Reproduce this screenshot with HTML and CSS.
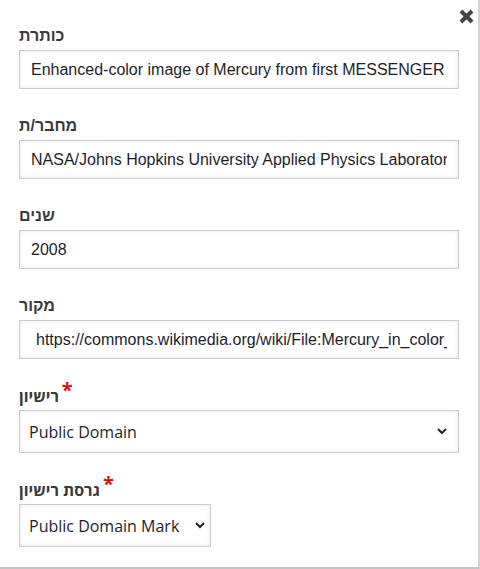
FILE: index.html
```html
<!DOCTYPE html>
<html lang="he">
<head>
<meta charset="utf-8">
<title>פרטי קובץ</title>
<link rel="stylesheet" href="styles.css">
</head>
<body>
<div class="panel">
  <button class="close" aria-label="סגירה">
    <svg width="15" height="15" viewBox="0 0 15 15"><path d="M2 2 L13 13 M13 2 L2 13" stroke="#444" stroke-width="4" stroke-linecap="butt"/></svg>
  </button>
  <form class="form">
    <div class="field">
      <label class="label">כותרת</label>
      <input class="input" type="text" value="Enhanced-color image of Mercury from first MESSENGER flyby">
    </div>
    <div class="field">
      <label class="label">מחבר/ת</label>
      <input class="input" type="text" value="NASA/Johns Hopkins University Applied Physics Laboratory/Carnegie Institution of Washington">
    </div>
    <div class="field">
      <label class="label">שנים</label>
      <input class="input" type="text" value="2008">
    </div>
    <div class="field">
      <label class="label">מקור</label>
      <input class="input input-url" type="text" value="https://commons.wikimedia.org/wiki/File:Mercury_in_color_-_Prockter07_centered.jpg">
    </div>
    <div class="field">
      <label class="label label-os"><span class="req">*</span>רישיון</label>
      <div class="select-wrap">
        <select class="select"><option>Public Domain</option></select>
        <svg class="chev" width="10" height="7" viewBox="0 0 10 7"><path d="M1 1 L5 5 L9 1" fill="none" stroke="#222" stroke-width="2"/></svg>
      </div>
    </div>
    <div class="field">
      <label class="label label-os"><span class="req">*</span>גרסת רישיון</label>
      <div class="select-wrap select-inline">
        <select class="select select-small"><option>Public Domain Mark</option></select>
        <svg class="chev chev-small" width="10" height="7" viewBox="0 0 10 7"><path d="M1 1 L5 5 L9 1" fill="none" stroke="#222" stroke-width="2"/></svg>
      </div>
    </div>
  </form>
</div>
</body>
</html>
```
FILE: styles.css
```css
html, body {
  margin: 0;
  padding: 0;
  background: #fff;
}
.panel {
  position: relative;
  box-sizing: border-box;
  width: 480px;
  height: 569px;
  border-right: 2px solid #d2d2d2;
  border-bottom: 2px solid #c4c4c4;
  background: #fff;
}
.close {
  position: absolute;
  top: 9px;
  right: 4px;
  padding: 0;
  margin: 0;
  border: 0;
  background: none;
  width: 15px;
  height: 15px;
  line-height: 0;
}
.form {
  display: flex;
  flex-direction: column;
  gap: 27px;
  padding: 26px 0 0 19px;
}
.field {
  display: flex;
  flex-direction: column;
  align-items: flex-start;
  gap: 4px;
}
.label {
  display: block;
  font-family: "Liberation Sans", Arial, sans-serif;
  font-weight: bold;
  font-size: 16px;
  line-height: 20px;
  color: #3a3a3a;
  direction: rtl;
}
.label-os {
  font-family: "Open Sans", "Liberation Sans", sans-serif;
}
.req {
  color: #d11;
  font-size: 20px;
  line-height: 0;
  position: relative;
  top: -5px;
  margin-left: 3px;
}
.input {
  box-sizing: border-box;
  width: 440px;
  height: 39px;
  margin: 0;
  padding: 0 11px;
  border: 1px solid #cbcbcb;
  border-radius: 0;
  background: #fff;
  box-shadow: inset 0 0 4px rgba(0, 0, 0, 0.09);
  font-family: "Liberation Sans", Arial, sans-serif;
  font-size: 16px;
  color: #1e1e2a;
  outline: none;
}
.input-url {
  padding-left: 16px;
}
.select-wrap {
  position: relative;
  width: 440px;
}
.select-inline {
  width: auto;
}
.select {
  box-sizing: border-box;
  width: 100%;
  height: 43px;
  margin: 0;
  padding: 0 34px 0 9px;
  border: 1px solid #cbcbcb;
  border-radius: 0;
  background: #fff;
  box-shadow: inset 0 0 4px rgba(0, 0, 0, 0.09);
  -webkit-appearance: none;
  appearance: none;
  font-family: "Open Sans", "Liberation Sans", sans-serif;
  font-size: 16px;
  color: #1e1e2a;
  outline: none;
}
.select-small {
  width: auto;
  padding-right: 30px;
}
.chev {
  position: absolute;
  right: 12px;
  top: 18px;
  pointer-events: none;
}
.chev-small {
  right: 6px;
}
```
